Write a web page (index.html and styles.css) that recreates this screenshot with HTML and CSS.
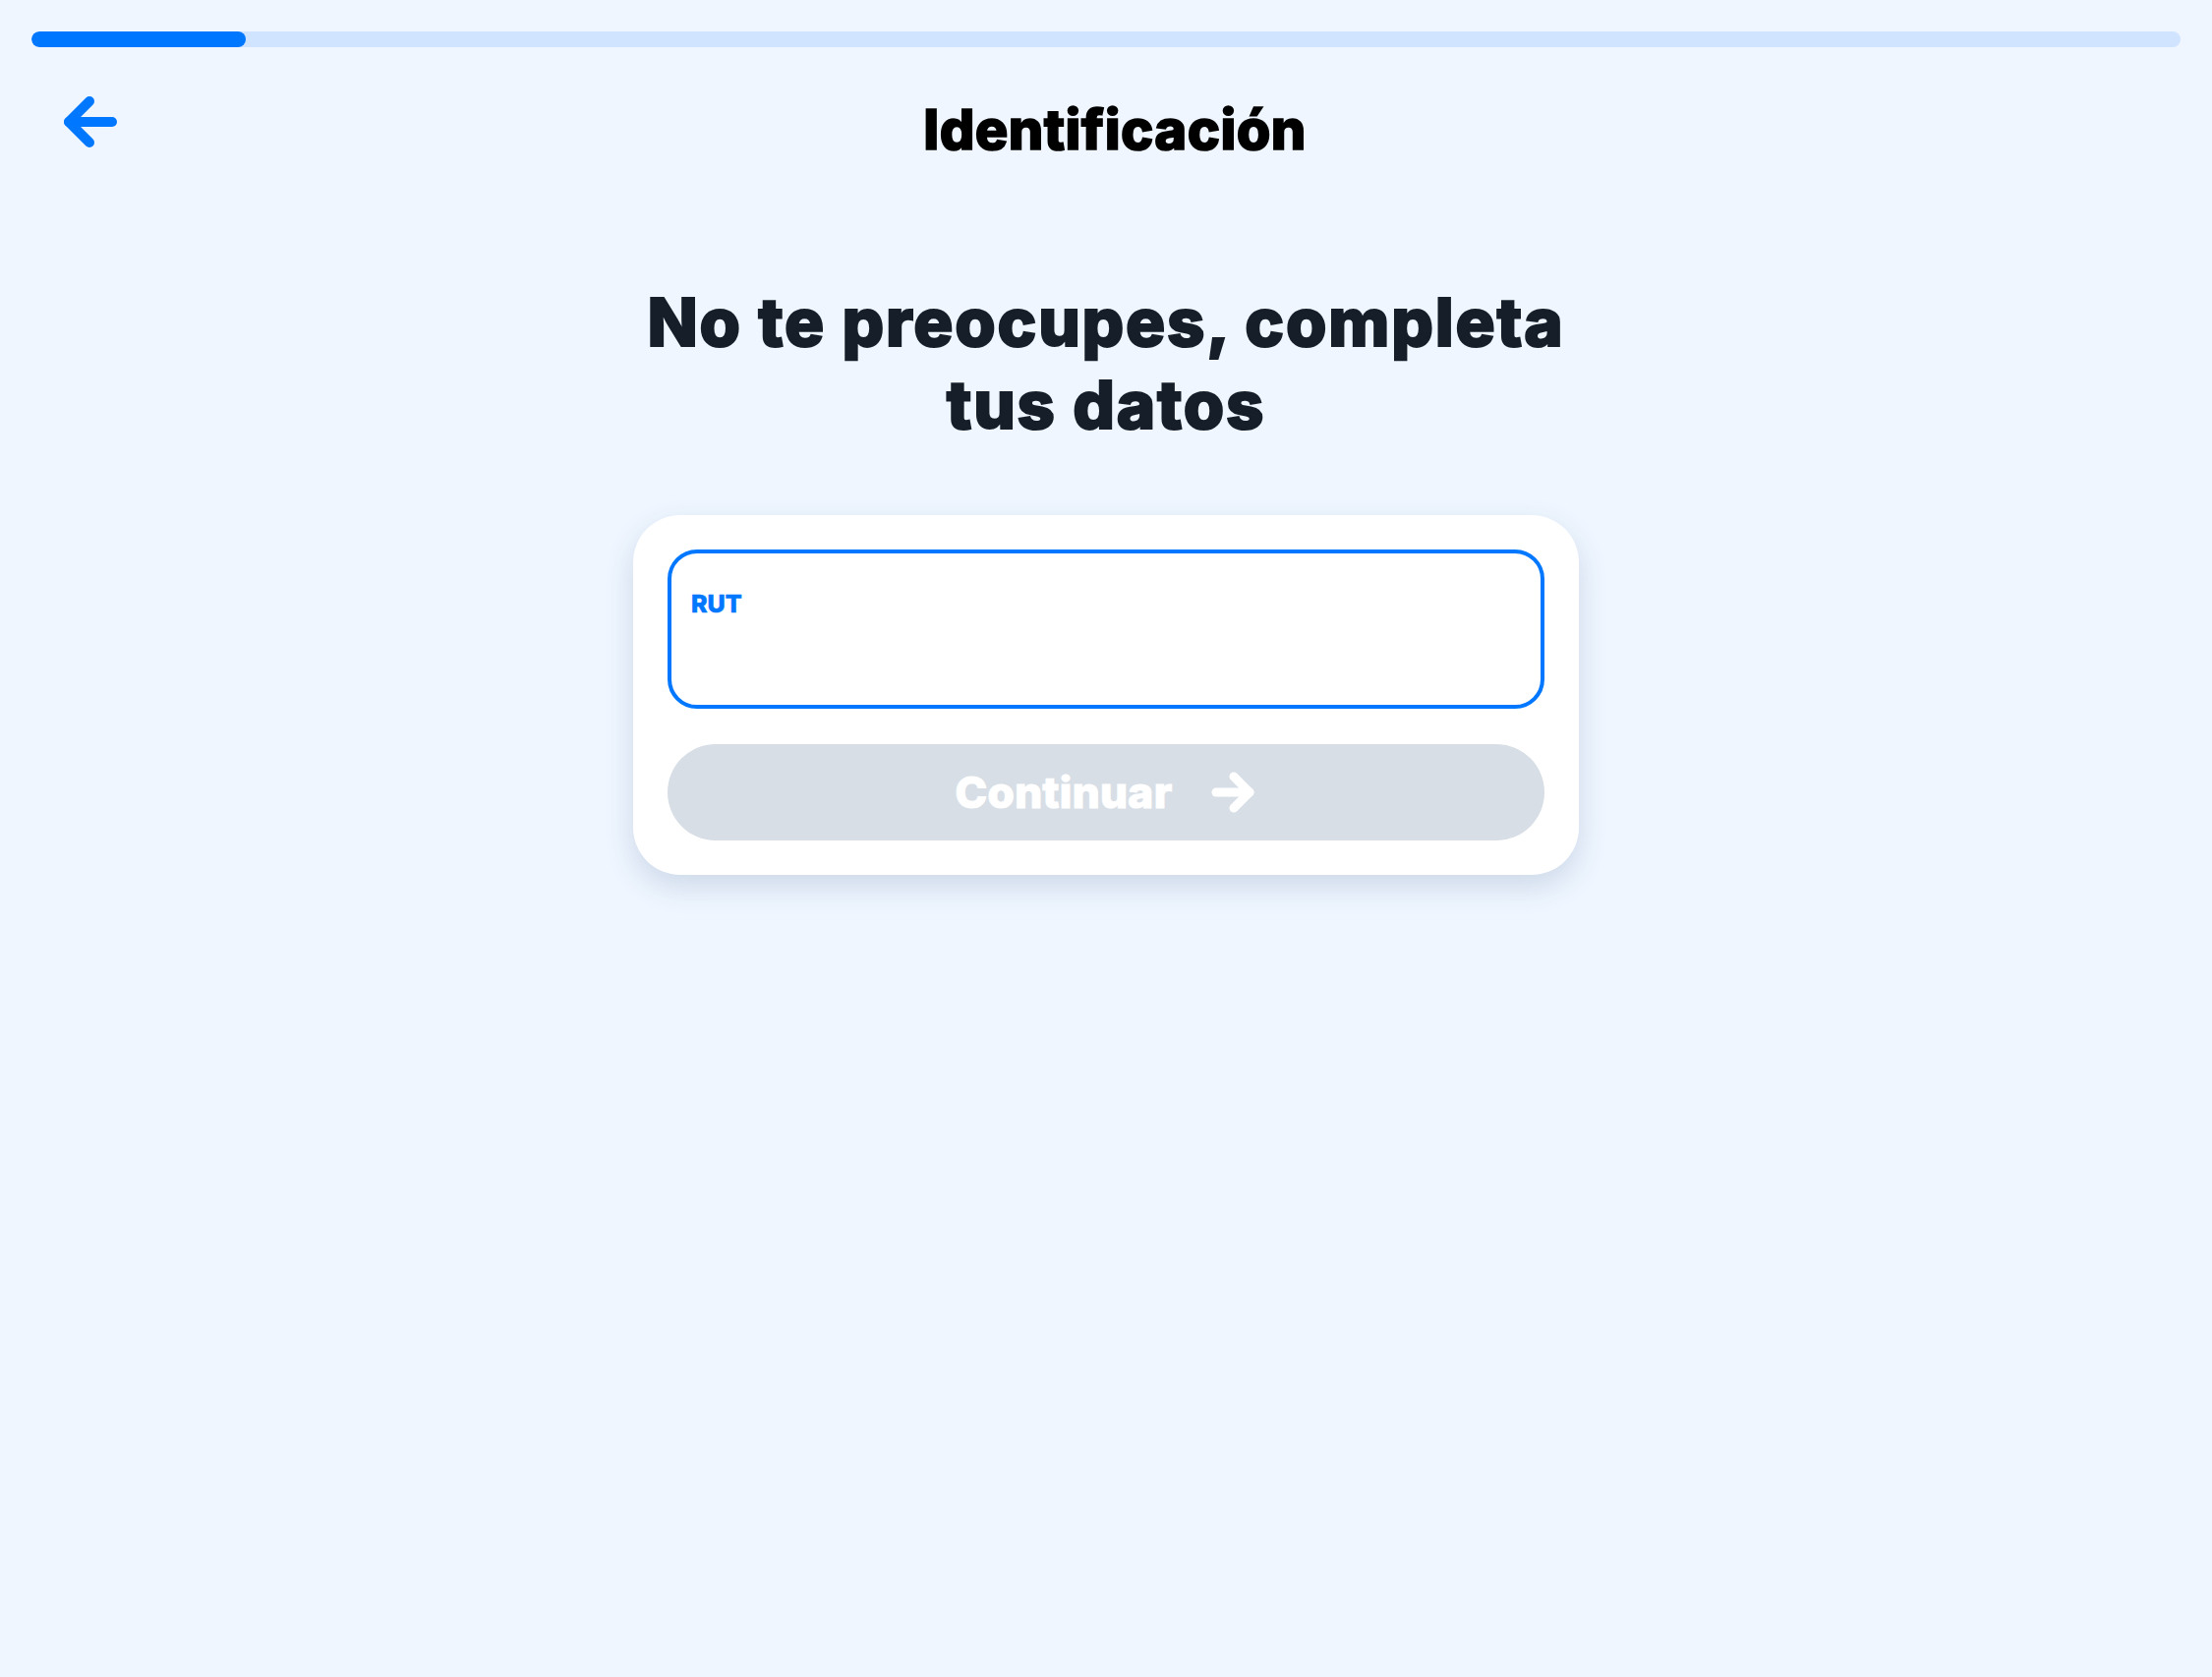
FILE: index.html
```html
<!DOCTYPE html>
<html lang="es">
<head>
<meta charset="utf-8">
<title>Identificación</title>
<link rel="stylesheet" href="styles.css">
</head>
<body>
<div class="page">
  <div class="progress"><div class="progress-fill"></div></div>
  <header class="header">
    <button class="back" aria-label="Volver">
      <svg width="60" height="60" viewBox="0 0 60 60" fill="none" stroke="#0077FF" stroke-width="10" stroke-linecap="round" stroke-linejoin="round">
        <path d="M52 30H8"/>
        <path d="M29 9L8 30L29 51"/>
      </svg>
    </button>
    <h1 class="title">Identificación</h1>
    <div class="spacer"></div>
  </header>
  <main class="main">
    <h2 class="heading">No te preocupes, completa<br>tus datos</h2>
    <div class="card">
      <label class="field">
        <span class="field-label">RUT</span>
        <input class="field-input" type="text">
      </label>
      <button class="continue" disabled>
        <span class="continue-text">Continuar</span>
        <svg width="50" height="50" viewBox="0 0 50 50" fill="none" stroke="#FFFFFF" stroke-width="9" stroke-linecap="round" stroke-linejoin="round">
          <path d="M8 25H42"/>
          <path d="M26 9L42 25L26 41"/>
        </svg>
      </button>
    </div>
  </main>
</div>
</body>
</html>
```

FILE: styles.css
```css
* { box-sizing: border-box; }

html, body {
  margin: 0;
  padding: 0;
  background: #EFF6FF;
  font-family: Inter, "Noto Sans", sans-serif;
}

.page {
  min-height: 1706px;
  padding: 32px 32px 0;
}

.progress {
  height: 16px;
  border-radius: 8px;
  background: #D0E4FF;
  overflow: hidden;
}

.progress-fill {
  width: 218px;
  height: 100%;
  border-radius: 8px;
  background: #0077FF;
}

.header {
  display: grid;
  grid-template-columns: 1fr auto 1fr;
  align-items: start;
  margin-top: 46px;
}

.back {
  justify-self: start;
  margin: 0 0 0 30px;
  padding: 0;
  border: 0;
  background: none;
  width: 60px;
  height: 60px;
  display: flex;
}

.title {
  margin: 10px 0 0;
  padding-left: 18px;
  font-size: 56px;
  line-height: 56px;
  font-weight: 800;
  color: #000000;
  letter-spacing: 0.4px;
  -webkit-text-stroke: 1.6px #000000;
}

.main {
  display: flex;
  flex-direction: column;
  align-items: center;
}

.heading {
  margin: 126px 0 0;
  font-size: 67px;
  line-height: 84px;
  font-weight: 800;
  color: #161E29;
  text-align: center;
  letter-spacing: 1.8px;
  -webkit-text-stroke: 2px #161E29;
}

.card {
  margin-top: 70px;
  width: 962px;
  padding: 35px;
  background: #FFFFFF;
  border-radius: 48px;
  box-shadow: 0 12px 30px rgba(30, 60, 110, 0.16);
  display: flex;
  flex-direction: column;
  gap: 36px;
}

.field {
  display: flex;
  flex-direction: column;
  height: 162px;
  border: 4px solid #0077FF;
  border-radius: 30px;
  padding: 36px 20px 0;
  background: #FFFFFF;
}

.field-label {
  font-size: 25px;
  line-height: 30px;
  font-weight: 800;
  color: #0077FF;
  -webkit-text-stroke: 0.6px #0077FF;
}

.field-input {
  border: 0;
  outline: none;
  background: transparent;
  font-family: inherit;
  font-size: 34px;
  padding: 8px 0 0;
  color: #161E29;
}

.continue {
  height: 98px;
  border: 0;
  border-radius: 49px;
  background: #D8DEE6;
  display: flex;
  align-items: center;
  justify-content: center;
  gap: 36px;
  padding: 0;
  font-family: inherit;
}

.continue-text {
  font-size: 44px;
  line-height: 50px;
  font-weight: 800;
  color: #FFFFFF;
  letter-spacing: 0.4px;
  -webkit-text-stroke: 1.2px #FFFFFF;
}

.continue svg { display: block; }
```
